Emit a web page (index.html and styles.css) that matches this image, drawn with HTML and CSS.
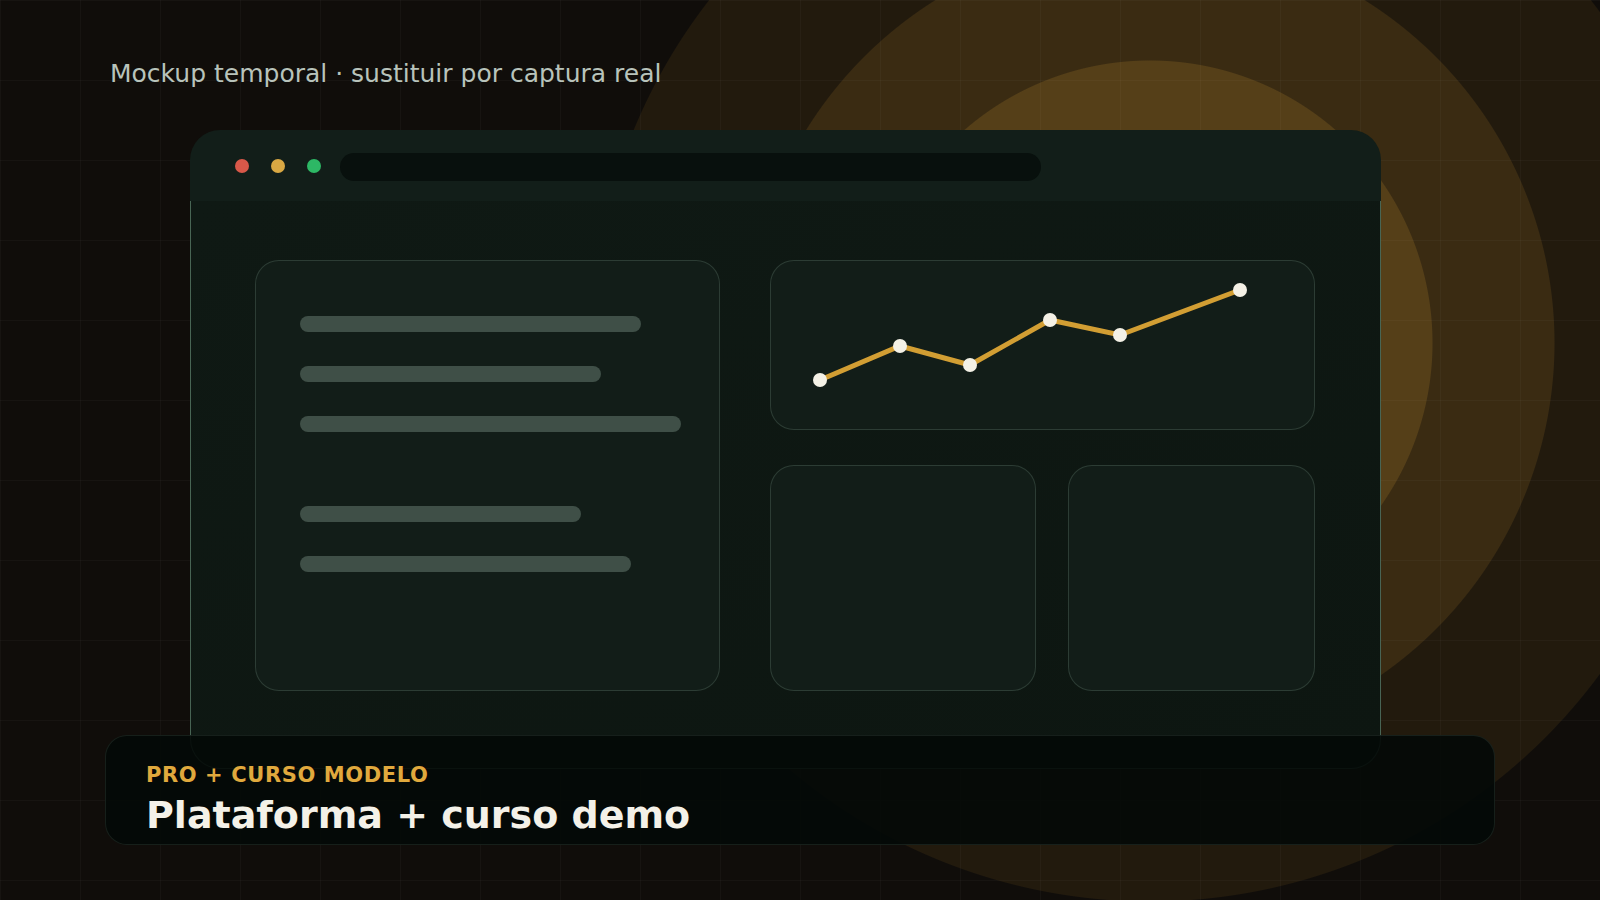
FILE: index.html
```html
<!DOCTYPE html>
<html lang="pt">
<head>
<meta charset="utf-8">
<title>Mockup temporal</title>
<link rel="stylesheet" href="styles.css">
</head>
<body>
<div class="stage">
  <p class="note">Mockup temporal · sustituir por captura real</p>
  <div class="window">
    <div class="titlebar">
      <div class="dots">
        <span class="dot dot-red"></span>
        <span class="dot dot-yellow"></span>
        <span class="dot dot-green"></span>
      </div>
      <div class="address"></div>
    </div>
    <div class="wbody">
      <div class="card card-text">
        <span class="bar bar-1"></span>
        <span class="bar bar-2"></span>
        <span class="bar bar-3"></span>
        <span class="bar bar-4 bar-spaced"></span>
        <span class="bar bar-5"></span>
      </div>
      <div class="rightcol">
        <div class="card card-chart">
          <svg class="chart" width="545" height="170" viewBox="0 0 545 170">
            <polyline points="50,120 130,86 200,105 280,60 350,75 470,30" fill="none" stroke="#d29e33" stroke-width="5" stroke-linejoin="miter"/>
            <circle cx="50" cy="120" r="7" fill="#f4f1e6"/>
            <circle cx="130" cy="86" r="7" fill="#f4f1e6"/>
            <circle cx="200" cy="105" r="7" fill="#f4f1e6"/>
            <circle cx="280" cy="60" r="7" fill="#f4f1e6"/>
            <circle cx="350" cy="75" r="7" fill="#f4f1e6"/>
            <circle cx="470" cy="30" r="7" fill="#f4f1e6"/>
          </svg>
        </div>
        <div class="minirow">
          <div class="card card-mini"></div>
          <div class="card card-mini"></div>
        </div>
      </div>
    </div>
  </div>
  <div class="caption">
    <div class="caption-label">PRO + CURSO MODELO</div>
    <div class="caption-title">Plataforma + curso demo</div>
  </div>
</div>
</body>
</html>
```

FILE: styles.css
```css
* { box-sizing: border-box; }

html, body {
  margin: 0;
  padding: 0;
  background: #100d0a;
}

.stage {
  position: relative;
  width: 1600px;
  height: 900px;
  overflow: hidden;
  padding: 0 0 0 110px;
  font-family: "DejaVu Sans", "Liberation Sans", sans-serif;
  background-color: #100d0a;
  background-image:
    linear-gradient(rgba(255, 255, 255, 0.028) 1px, transparent 1px),
    linear-gradient(90deg, rgba(255, 255, 255, 0.028) 1px, transparent 1px),
    radial-gradient(circle at 1150px 343px, #553f18 0, #553f18 282px, #3a2b12 283px, #3a2b12 404px, #221a0d 405px, #221a0d 558px, rgba(16, 13, 10, 0) 559px);
  background-size: 80px 80px, 80px 80px, 100% 100%;
}

.note {
  margin: 0;
  padding-top: 58px;
  height: 130px;
  font-size: 25px;
  line-height: 31px;
  color: #b8c3bb;
}

.window {
  margin-left: 80px;
  width: 1191px;
  height: 639px;
  border-radius: 30px;
  display: flex;
  flex-direction: column;
}

.titlebar {
  height: 71px;
  flex: none;
  background: #121e19;
  border-radius: 30px 30px 0 0;
  display: flex;
  align-items: center;
  padding-left: 45px;
}

.dots {
  display: flex;
  gap: 22px;
}

.dot {
  width: 14px;
  height: 14px;
  border-radius: 50%;
}

.dot-red { background: #d85849; }
.dot-yellow { background: #d9a843; }
.dot-green { background: #2db865; }

.address {
  margin-left: 19px;
  margin-top: 2px;
  width: 701px;
  height: 28px;
  border-radius: 14px;
  background: #08100d;
}

.wbody {
  flex: 1;
  background: linear-gradient(160deg, #0f1914 0%, #0d1611 100%);
  border: 1px solid rgba(120, 165, 138, 0.55);
  border-top: none;
  border-radius: 0 0 30px 30px;
  display: flex;
  gap: 50px;
  padding: 59px 0 0 64px;
}

.card {
  background: #121d18;
  border: 1px solid rgba(150, 185, 165, 0.2);
  border-radius: 24px;
}

.card-text {
  width: 465px;
  height: 431px;
  padding: 55px 0 0 44px;
  display: flex;
  flex-direction: column;
  gap: 34px;
}

.bar {
  display: block;
  height: 16px;
  border-radius: 8px;
  background: #3f4f47;
}

.bar-1 { width: 341px; }
.bar-2 { width: 301px; }
.bar-3 { width: 381px; }
.bar-4 { width: 281px; }
.bar-5 { width: 331px; }

.bar-spaced { margin-top: 40px; }

.rightcol {
  width: 545px;
  display: flex;
  flex-direction: column;
  gap: 35px;
}

.card-chart {
  height: 170px;
  position: relative;
  overflow: hidden;
}

.chart {
  position: absolute;
  left: -1px;
  top: -1px;
}

.minirow {
  display: grid;
  grid-template-columns: 266px 247px;
  gap: 32px;
}

.card-mini {
  height: 226px;
}

.caption {
  position: absolute;
  left: 105px;
  top: 735px;
  width: 1390px;
  height: 110px;
  border-radius: 22px;
  background: rgba(3, 9, 7, 0.9);
  border: 1px solid rgba(120, 150, 130, 0.16);
  padding: 26px 0 0 40px;
}

.caption-label {
  font-size: 21px;
  font-weight: bold;
  line-height: 26px;
  letter-spacing: 0.6px;
  color: #e0a93d;
}

.caption-title {
  margin-top: 4px;
  font-size: 38px;
  font-weight: bold;
  line-height: 46px;
  color: #f4f1e8;
}
```
